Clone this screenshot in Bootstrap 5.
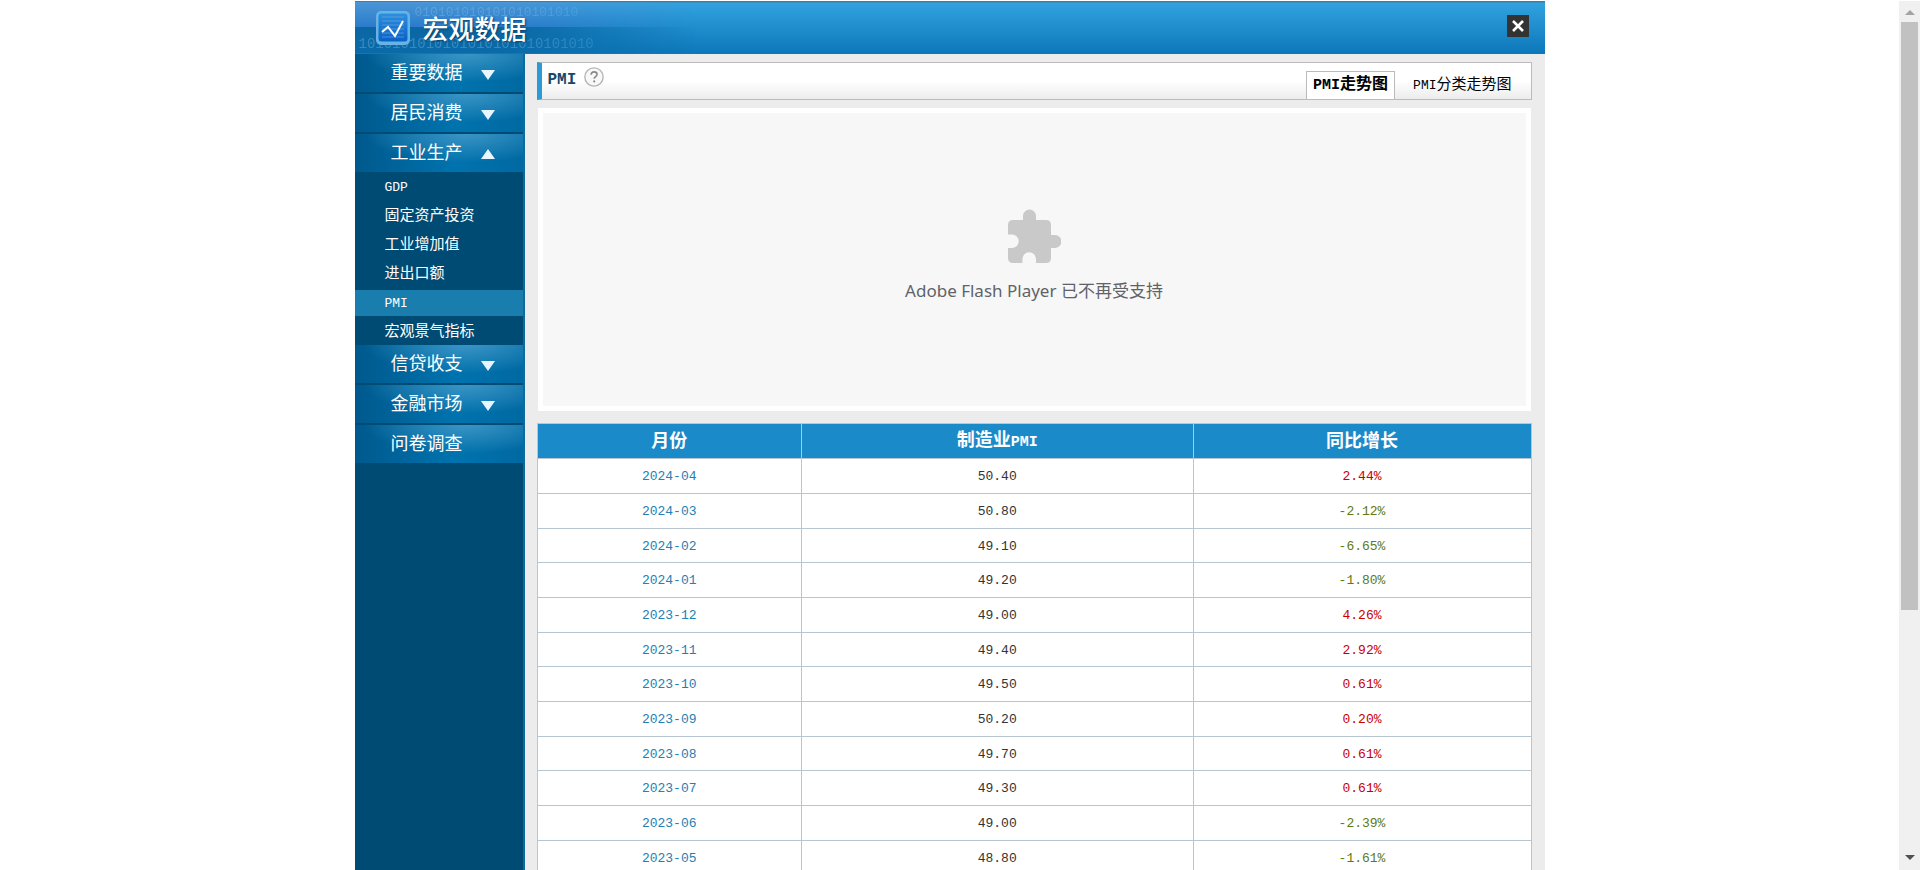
<!DOCTYPE html>
<html lang="zh-CN">
<head>
<meta charset="utf-8">
<meta name="viewport" content="width=device-width, initial-scale=1">
<title>宏观数据 - PMI</title>
<link rel="stylesheet" href="https://cdn.jsdelivr.net/npm/bootstrap@5.3.0/dist/css/bootstrap.min.css">
<style>
  body { font-family: "Liberation Mono", "Noto Sans CJK SC", monospace; font-size: 15px; color: #333; }
  a { text-decoration: none; }
  .shell { width: 1190px; max-width: 100%; }
  .en-sm { font-size: 13px; }
  .en-md { font-size: 15px; }

  /* top banner */
  .banner { height: 54px; padding: 0 16px 0 20px; border-top: 1px solid #fff; background: linear-gradient(#3a7fa8 0 1px, #32a2df 2px, #0c77b9 100%); }
  .banner-tint { inset: 1px auto 1px 0; width: 340px; background: linear-gradient(#4a96d6 0, #2c7ccb 48%, #0a67a3 50%, #0a6baa 100%); -webkit-mask-image: linear-gradient(90deg, #000 45%, transparent); mask-image: linear-gradient(90deg, #000 45%, transparent); }
  .bits { color: #8cc4ea; opacity: .35; font-size: 13px; line-height: 12px; }
  .bits-top { left: 60px; top: 5px; }
  .bits-low { left: 4px; top: 36px; font-size: 14px; }
  .banner h1 { font-family: "Noto Sans CJK SC", sans-serif; font-size: 26px; line-height: 30px; font-weight: 500; text-shadow: 1px 1px 2px #06406b; }
  .close-btn { width: 22px; height: 22px; background: #333; }

  /* side menu */
  .side { width: 170px; background: #004b73; border-right: 2px solid #0b6b9f; }
  .side-head { height: 40px; padding: 2px 28px 0 36px; border: 0; border-bottom: 2px solid #004b73; color: #fff; font-size: 18px; line-height: 36px;
    background: radial-gradient(ellipse 60% 75% at 66% 0, #3a94c4, transparent), linear-gradient(90deg, #00598d, #0073ae 60%, #0069a2); }
  .side-sub a { height: 26px; line-height: 28px; padding-left: 30px; color: #fff; }
  .side-sub { gap: 3px; }
  .side-sub a.active { background: #197dae; }

  /* content column */
  .main { background: #ececec; padding: 8px 13px 0 12px; }
  .title-bar { height: 38px; border: 1px solid #bbb; border-left: 5px solid #2b9bd8; background: linear-gradient(#fff 50%, #ececec); padding: 0 0 0 6px; }
  .title-bar h2 { font-size: 16px; line-height: 34px; color: #124a6c; }
  .tab-link { height: 27px; line-height: 27px; color: #000; padding: 0 19px 0 18px; }
  .tab-link.active { background: #fff; border: 1px solid #bbb; border-bottom: 0; font-weight: bold; font-size: 16px; height: 28px; padding: 0 6px; }
  .chart-box { margin: 8px 1px 12px; padding-bottom: 8px; height: 303px; border: 5px solid #fff; background: #f7f7f7; }
  .chart-box p { font-family: "Noto Sans", "Noto Sans CJK SC", sans-serif; font-size: 17px; line-height: 24px; color: #5f6368; }

  /* data table */
  .pmi-table { table-layout: fixed; background: #fff; border: 1px solid #b8c6d2; text-align: center; }
  .pmi-table th, .pmi-table td { border: 1px solid #b8c6d2; padding: 2px 0 0; }
  .pmi-table th { height: 35px; background: #1b8ac9; color: #fff; font-size: 18px; line-height: 26px; }
  .pmi-table td { height: 35px; font-size: 13px; line-height: 20px; }
  .pmi-table tr:nth-child(3n) td { height: 34px; }
  .pmi-table a { color: #2480b3; }
  .up { color: #c90000; }
  .down { color: #5e7a10; }
  .w-month { width: 26.6%; }
  .w-value { width: 39.4%; }

  /* scroll rail */
  .rail { width: 21px; background: #f0f0f0; border-top: 1px solid #fff; padding: 8px 2px 9px; }
  .rail-thumb { background: #c1c1c1; height: 69%; margin-top: 7px; }
</style>
</head>
<body class="bg-white">
<div class="d-flex vh-100 overflow-hidden">
  <div class="flex-grow-1 d-flex justify-content-center">
    <div class="shell d-flex flex-column">
      <header class="banner position-relative d-flex align-items-center justify-content-between flex-shrink-0">
        <div class="banner-tint position-absolute overflow-hidden" aria-hidden="true">
          <span class="bits bits-top position-absolute">010101010101010101010</span>
          <span class="bits bits-low position-absolute">1010101010101010101010101010</span>
        </div>
        <div class="position-relative d-flex align-items-center">
          <svg width="36" height="36" viewBox="0 0 36 36" aria-hidden="true">
            <defs><linearGradient id="tile" x1="0" y1="0" x2="0" y2="1"><stop offset="0" stop-color="#2f8fdd"/><stop offset="1" stop-color="#0a5fc4"/></linearGradient></defs>
            <rect x="1" y="1" width="34" height="34" rx="5" fill="#6fb0e0"/>
            <rect x="3" y="3" width="30" height="29" rx="3" fill="url(#tile)" stroke="#4cc0f2"/>
            <path d="M7 7h22M7 11h22M7 15h22M7 19h22M7 23h22M7 27h22" stroke="#78b9ec" opacity=".5"/>
            <path d="M7 21l5-5 4 11 3-5 3 5 7-16" fill="none" stroke="#fff" stroke-width="0"/>
            <path d="M7 22l6-5 7 9 8-15" fill="none" stroke="#fff" stroke-width="2"/>
          </svg>
          <h1 class="text-white m-0 ms-2 ps-1">宏观数据</h1>
        </div>
        <button type="button" class="close-btn border-0 p-0 d-flex align-items-center justify-content-center mb-1" aria-label="关闭">
          <svg width="14" height="14" viewBox="0 0 14 14"><path d="M2 2l10 10M12 2L2 12" stroke="#fff" stroke-width="2.600"/></svg>
        </button>
      </header>

      <div class="d-flex flex-grow-1">
        <nav class="side flex-shrink-0 d-flex flex-column">
          <button type="button" class="side-head d-flex align-items-center justify-content-between">重要数据<svg width="14" height="11" viewBox="0 0 14 11"><path d="M0 1h14L7 11z" fill="#e9f6ff"/></svg></button>
          <button type="button" class="side-head d-flex align-items-center justify-content-between">居民消费<svg width="14" height="11" viewBox="0 0 14 11"><path d="M0 1h14L7 11z" fill="#e9f6ff"/></svg></button>
          <button type="button" class="side-head d-flex align-items-center justify-content-between">工业生产<svg width="14" height="11" viewBox="0 0 14 11"><path d="M0 10h14L7 0z" fill="#e9f6ff"/></svg></button>
          <div class="side-sub d-flex flex-column">
            <a href="#"><span class="en-sm">GDP</span></a>
            <a href="#">固定资产投资</a>
            <a href="#">工业增加值</a>
            <a href="#">进出口额</a>
            <a href="#" class="active"><span class="en-sm">PMI</span></a>
            <a href="#">宏观景气指标</a>
          </div>
          <button type="button" class="side-head d-flex align-items-center justify-content-between">信贷收支<svg width="14" height="11" viewBox="0 0 14 11"><path d="M0 1h14L7 11z" fill="#e9f6ff"/></svg></button>
          <button type="button" class="side-head d-flex align-items-center justify-content-between">金融市场<svg width="14" height="11" viewBox="0 0 14 11"><path d="M0 1h14L7 11z" fill="#e9f6ff"/></svg></button>
          <button type="button" class="side-head d-flex align-items-center justify-content-between">问卷调查</button>
        </nav>

        <main class="main flex-grow-1">
          <div class="title-bar d-flex justify-content-between">
            <div class="d-flex">
              <h2 class="fw-bold m-0">PMI</h2>
              <a href="#" class="ms-2 mt-1" aria-label="说明"><svg class="d-block" width="20" height="20" viewBox="0 0 19 19" fill="none"><circle cx="9.5" cy="9.5" r="8.7" fill="#f8f8f8" stroke="#b5b5b5" stroke-width="1.3"/><path d="M6.8 7.3c.1-1.800 1.200-2.700 2.800-2.700s2.800.9 2.800 2.400c0 2-2.700 2.100-2.700 4.100" stroke="#888" stroke-width="1.500"/><circle cx="9.700" cy="13.700" r="1" fill="#888"/></svg></a>
            </div>
            <div class="d-flex align-items-end">
              <a href="#" class="tab-link active mb-n1"><span class="en-md">PMI</span>走势图</a>
              <a href="#" class="tab-link"><span class="en-sm">PMI</span>分类走势图</a>
            </div>
          </div>

          <div class="chart-box d-flex flex-column align-items-center justify-content-center">
            <svg width="54" height="54" viewBox="0 0 54 54" aria-hidden="true"><path fill="#c9c9c9" d="M5 11h11V7a6.500 6.500 0 0 1 13 0v4h10q5 0 5 5v10h4a6.500 6.500 0 0 1 0 13h-4v10q0 5-5 5h-10v-4a6.800 6.800 0 0 0-13.600 0v4H6q-5 0-5-5V39h4a6.700 6.700 0 0 0 0-13.400H1V16q0-5 5-5z"/></svg>
            <p class="m-0 mt-3">Adobe Flash Player 已不再受支持</p>
          </div>

          <table class="pmi-table w-100">
            <thead>
              <tr><th scope="col" class="w-month">月份</th><th scope="col" class="w-value">制造业<span class="en-md">PMI</span></th><th scope="col">同比增长</th></tr>
            </thead>
            <tbody>
              <tr><td><a href="#">2024-04</a></td><td>50.40</td><td class="up">2.44%</td></tr>
              <tr><td><a href="#">2024-03</a></td><td>50.80</td><td class="down">-2.12%</td></tr>
              <tr><td><a href="#">2024-02</a></td><td>49.10</td><td class="down">-6.65%</td></tr>
              <tr><td><a href="#">2024-01</a></td><td>49.20</td><td class="down">-1.80%</td></tr>
              <tr><td><a href="#">2023-12</a></td><td>49.00</td><td class="up">4.26%</td></tr>
              <tr><td><a href="#">2023-11</a></td><td>49.40</td><td class="up">2.92%</td></tr>
              <tr><td><a href="#">2023-10</a></td><td>49.50</td><td class="up">0.61%</td></tr>
              <tr><td><a href="#">2023-09</a></td><td>50.20</td><td class="up">0.20%</td></tr>
              <tr><td><a href="#">2023-08</a></td><td>49.70</td><td class="up">0.61%</td></tr>
              <tr><td><a href="#">2023-07</a></td><td>49.30</td><td class="up">0.61%</td></tr>
              <tr><td><a href="#">2023-06</a></td><td>49.00</td><td class="down">-2.39%</td></tr>
              <tr><td><a href="#">2023-05</a></td><td>48.80</td><td class="down">-1.61%</td></tr>
            </tbody>
          </table>
        </main>
      </div>
    </div>
  </div>

  <div class="rail flex-shrink-0 d-flex flex-column" aria-hidden="true">
    <svg class="d-block mx-auto flex-shrink-0" width="10" height="6" viewBox="0 0 10 6"><path d="M0 6h10L5 1z" fill="#a3a3a3"/></svg>
    <div class="rail-thumb"></div>
    <svg class="d-block mx-auto mt-auto flex-shrink-0" width="10" height="6" viewBox="0 0 10 6"><path d="M0 0h10L5 5z" fill="#505050"/></svg>
  </div>
</div>
<script src="https://cdn.jsdelivr.net/npm/bootstrap@5.3.0/dist/js/bootstrap.bundle.min.js"></script>
</body>
</html>
